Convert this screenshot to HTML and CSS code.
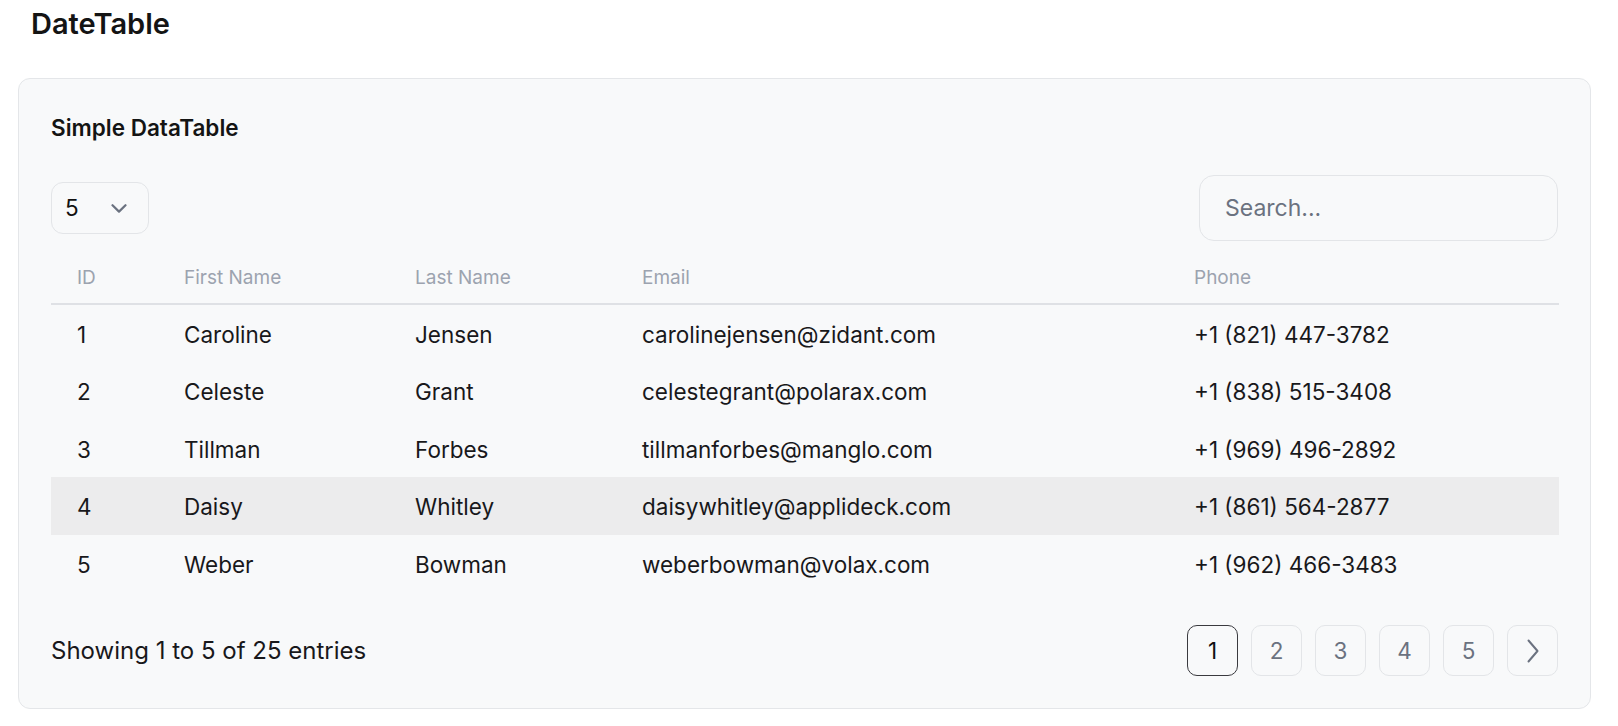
FILE: index.html
```html
<!DOCTYPE html>
<html lang="en">
<head>
<meta charset="utf-8">
<title>DateTable</title>
<link rel="stylesheet" href="styles.css">
</head>
<body>
<div class="page">
  <h1 class="page-title">DateTable</h1>
  <section class="card">
    <h2 class="card-title">Simple DataTable</h2>
    <div class="controls">
      <div class="select">
        <span class="select-value">5</span>
        <svg class="select-chevron" width="16" height="9" viewBox="0 0 16 9" fill="none"><path d="M1.5 1.2 L8 7.6 L14.5 1.2" stroke="#6b7280" stroke-width="2.2" stroke-linecap="round" stroke-linejoin="round"/></svg>
      </div>
      <input class="search" type="text" placeholder="Search...">
    </div>
    <table class="table">
      <colgroup>
        <col class="c-id"><col class="c-first"><col class="c-last"><col class="c-email"><col class="c-phone">
      </colgroup>
      <thead>
        <tr><th>ID</th><th>First Name</th><th>Last Name</th><th>Email</th><th>Phone</th></tr>
      </thead>
      <tbody>
        <tr><td>1</td><td>Caroline</td><td>Jensen</td><td>carolinejensen@zidant.com</td><td>+1 (821) 447-3782</td></tr>
        <tr><td>2</td><td>Celeste</td><td>Grant</td><td>celestegrant@polarax.com</td><td>+1 (838) 515-3408</td></tr>
        <tr><td>3</td><td>Tillman</td><td>Forbes</td><td>tillmanforbes@manglo.com</td><td>+1 (969) 496-2892</td></tr>
        <tr class="is-hover"><td>4</td><td>Daisy</td><td>Whitley</td><td>daisywhitley@applideck.com</td><td>+1 (861) 564-2877</td></tr>
        <tr><td>5</td><td>Weber</td><td>Bowman</td><td>weberbowman@volax.com</td><td>+1 (962) 466-3483</td></tr>
      </tbody>
    </table>
    <div class="footer">
      <div class="summary">Showing 1 to 5 of 25 entries</div>
      <nav class="pager">
        <button class="page-btn active">1</button>
        <button class="page-btn">2</button>
        <button class="page-btn">3</button>
        <button class="page-btn">4</button>
        <button class="page-btn">5</button>
        <button class="page-btn">
          <svg width="12" height="24" viewBox="0 0 12 24" fill="none"><path d="M1.5 1.5 L10.5 12 L1.5 22.5" stroke="#6b7280" stroke-width="2" stroke-linecap="round" stroke-linejoin="round"/></svg>
        </button>
      </nav>
    </div>
  </section>
</div>
</body>
</html>
```
FILE: styles.css
```css
* { box-sizing: border-box; }
html, body { margin: 0; padding: 0; background: #ffffff; }
body {
  font-family: Inter, "Noto Sans", "Liberation Sans", sans-serif;
  color: #18181b;
}
.page {
  padding: 1px 27px 0 18px;
}
.page-title {
  margin: 0 0 32px 0;
  padding-left: 13px;
  font-size: 29px;
  line-height: 45px;
  font-weight: 600;
  color: #141414;
}
.card {
  background: #f8f9fa;
  border: 1px solid #e4e6e9;
  border-radius: 12px;
  padding: 32px;
}
.card-title {
  margin: 1px 0 0 0;
  font-size: 22.5px;
  line-height: 32px;
  font-weight: 600;
  color: #141414;
}
.controls {
  margin-top: 31px;
  display: flex;
  align-items: center;
  justify-content: space-between;
}
.select {
  width: 98px;
  height: 52px;
  border: 1px solid #e3e5e8;
  border-radius: 12px;
  display: flex;
  align-items: center;
  justify-content: space-between;
  padding: 0 21px 0 13px;
}
.select-value {
  font-size: 22.5px;
  line-height: 1;
  color: #111;
}
.search {
  width: 359px;
  height: 66px;
  border: 1px solid #e3e5e8;
  border-radius: 15px;
  background: transparent;
  padding: 0 24px 0 25px;
  font-family: inherit;
  font-size: 23px;
  color: #111;
  outline: none;
}
.search::placeholder { color: #6b7280; }
.table {
  width: 100%;
  margin-top: 16px;
  border-collapse: collapse;
  table-layout: fixed;
}
.c-id { width: 107px; }
.c-first { width: 231px; }
.c-last { width: 227px; }
.c-email { width: 552px; }
.c-phone { width: 391px; }
.table th {
  text-align: left;
  font-weight: 400;
  font-size: 19px;
  line-height: 28.5px;
  color: #9ca3af;
  padding: 7px 24px 10px 26px;
  border-bottom: 2px solid #dfe1e5;
}
.table td {
  font-size: 22.5px;
  line-height: 31.6px;
  padding: 14px 24px 12px 26px;
  color: #18181b;
  white-space: nowrap;
}
.table tr.is-hover td { background: #ececed; }
.footer {
  margin-top: 33px;
  display: flex;
  align-items: center;
  justify-content: space-between;
}
.summary {
  font-size: 24px;
  line-height: 34px;
  color: #18181b;
}
.pager {
  display: flex;
  gap: 13px;
}
.page-btn {
  width: 51px;
  height: 51px;
  border: 1px solid #e3e5e8;
  border-radius: 10px;
  background: transparent;
  font-family: inherit;
  font-size: 22.5px;
  color: #6b7280;
  display: flex;
  align-items: center;
  justify-content: center;
  padding: 0;
}
.page-btn.active {
  border: 1.5px solid #3a3a3f;
  color: #111;
}
```
